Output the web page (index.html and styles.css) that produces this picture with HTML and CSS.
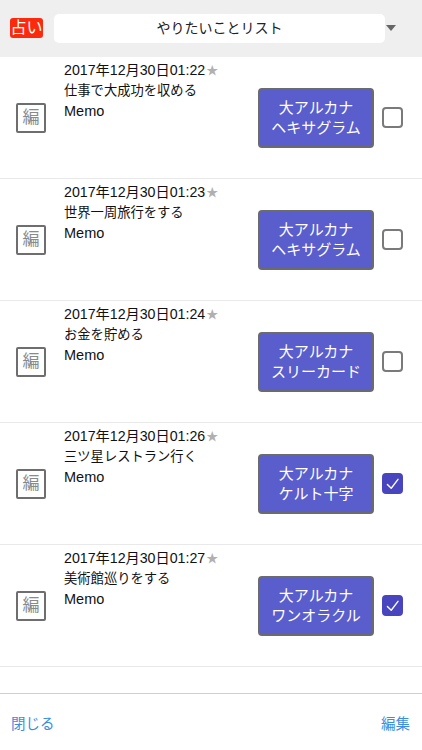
FILE: index.html
```html
<!DOCTYPE html>
<html lang="ja">
<head>
  <meta charset="UTF-8">
  <meta name="viewport" content="width=device-width, initial-scale=1.0">
  <title>やりたいことリスト</title>
  <link rel="stylesheet" href="styles.css">
</head>
<body>
  <!-- ヘッダー -->
  <div class="header">
    <span class="badge">占い</span>
    <div class="select">やりたいことリスト</div>
    <span class="caret"></span>
  </div>

  <!-- リスト -->
  <div class="list">
    <div class="row">
      <span class="edit">編</span>
      <div class="info">
        <div class="date">2017年12月30日01:22<span class="star">★</span></div>
        <div class="title">仕事で大成功を収める</div>
        <div class="memo">Memo</div>
      </div>
      <button class="spread">大アルカナ<br>ヘキサグラム</button>
      <span class="check"></span>
    </div>
    <div class="row">
      <span class="edit">編</span>
      <div class="info">
        <div class="date">2017年12月30日01:23<span class="star">★</span></div>
        <div class="title">世界一周旅行をする</div>
        <div class="memo">Memo</div>
      </div>
      <button class="spread">大アルカナ<br>ヘキサグラム</button>
      <span class="check"></span>
    </div>
    <div class="row">
      <span class="edit">編</span>
      <div class="info">
        <div class="date">2017年12月30日01:24<span class="star">★</span></div>
        <div class="title">お金を貯める</div>
        <div class="memo">Memo</div>
      </div>
      <button class="spread">大アルカナ<br>スリーカード</button>
      <span class="check"></span>
    </div>
    <div class="row">
      <span class="edit">編</span>
      <div class="info">
        <div class="date">2017年12月30日01:26<span class="star">★</span></div>
        <div class="title">三ツ星レストラン行く</div>
        <div class="memo">Memo</div>
      </div>
      <button class="spread">大アルカナ<br>ケルト十字</button>
      <span class="check checked">
        <svg viewBox="0 0 20 20" width="20" height="20"><path d="M4 10.5 L8.5 15 L16.5 4.5" fill="none" stroke="#fff" stroke-width="1.6" stroke-linecap="round" stroke-linejoin="round"/></svg>
      </span>
    </div>
    <div class="row">
      <span class="edit">編</span>
      <div class="info">
        <div class="date">2017年12月30日01:27<span class="star">★</span></div>
        <div class="title">美術館巡りをする</div>
        <div class="memo">Memo</div>
      </div>
      <button class="spread">大アルカナ<br>ワンオラクル</button>
      <span class="check checked">
        <svg viewBox="0 0 20 20" width="20" height="20"><path d="M4 10.5 L8.5 15 L16.5 4.5" fill="none" stroke="#fff" stroke-width="1.6" stroke-linecap="round" stroke-linejoin="round"/></svg>
      </span>
    </div>
  </div>

  <!-- フッター -->
  <div class="footer">
    <span class="link">閉じる</span>
    <span class="link">編集</span>
  </div>
</body>
</html>
```

FILE: styles.css
```css
* {
  margin: 0;
  padding: 0;
  box-sizing: border-box;
}
html, body {
  width: 100%;
  height: 100%;
  background-color: #fff;
  overflow: hidden;
  font-family: "Liberation Sans", "Noto Sans CJK JP", sans-serif;
  color: #111;
}
body {
  display: flex;
  flex-direction: column;
}

.header {
  height: 57px;
  background: #efefef;
  display: flex;
  align-items: center;
  padding-left: 10px;
  padding-bottom: 1px;
}
.badge {
  width: 33px;
  height: 20px;
  background: #fc2a0d;
  color: #fff;
  border-radius: 3px;
  font-size: 16px;
  line-height: 20px;
  text-align: center;
  margin-right: 11px;
}
.select {
  width: 331px;
  height: 29px;
  background: #fff;
  border-radius: 5px;
  font-size: 14px;
  line-height: 29px;
  text-align: center;
  color: #222;
}
.caret {
  width: 0;
  height: 0;
  margin-left: 1px;
  border-left: 5px solid transparent;
  border-right: 5px solid transparent;
  border-top: 6px solid #666;
}

.list {
  flex: 1;
}
.row {
  height: 122px;
  border-bottom: 1px solid #e9e9e9;
  display: flex;
  align-items: center;
  padding-left: 16px;
  padding-right: 19px;
}
.edit {
  width: 30px;
  height: 30px;
  border: 2px solid #6e6e6e;
  border-radius: 2px;
  color: #8a8a8a;
  font-size: 17px;
  line-height: 26px;
  text-align: center;
  margin-right: 18px;
}
.info {
  flex: 1;
  align-self: flex-start;
  padding-top: 3px;
}
.date {
  font-size: 14.2px;
  line-height: 20px;
}
.star {
  color: #b0b0b0;
  font-size: 12px;
  margin-left: 1px;
}
.title {
  font-size: 13.3px;
  line-height: 20px;
}
.memo {
  font-size: 14.5px;
  line-height: 21px;
}
.spread {
  width: 116px;
  height: 60px;
  background: #5a5dcc;
  border: 2px solid #6b6b6b;
  border-radius: 4px;
  color: #fff;
  font-family: inherit;
  font-size: 15px;
  line-height: 20px;
  margin-right: 8px;
}
.check {
  width: 21px;
  height: 21px;
  border: 2px solid #7a7a7a;
  border-radius: 4px;
  display: flex;
  align-items: center;
  justify-content: center;
}
.check.checked {
  background: #4845bf;
  border-color: #4845bf;
}

.footer {
  height: 57px;
  border-top: 1px solid #cfcfcf;
  display: flex;
  justify-content: space-between;
  align-items: center;
  padding: 0 12px 0 11px;
}
.link {
  color: #3c8ce0;
  font-size: 14.5px;
}
```
